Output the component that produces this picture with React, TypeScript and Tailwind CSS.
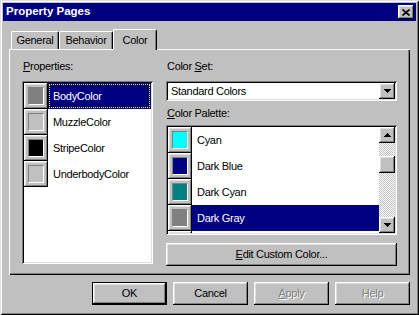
import React from 'react';

const raised =
  'shadow-[inset_-1px_-1px_0_#000,inset_1px_1px_0_#fff,inset_-2px_-2px_0_#808080,inset_2px_2px_0_#dfdfdf]';
const sunken =
  'shadow-[inset_1px_1px_0_#808080,inset_-1px_-1px_0_#fff,inset_2px_2px_0_#000,inset_-2px_-2px_0_#dfdfdf]';

function Swatch({ bg }: { bg: string }) {
  return (
    <div className={`w-[24px] h-[26px] shrink-0 bg-[#c0c0c0] p-[4px] ${raised}`}>
      <div className={`h-full border border-t-[#808080] border-l-[#808080] border-b-white border-r-white ${bg}`} />
    </div>
  );
}

function Row({ bg, label, selected, focus }: { bg: string; label: string; selected?: boolean; focus?: boolean }) {
  return (
    <div className="flex h-[26px] shrink-0">
      <Swatch bg={bg} />
      {selected ? (
        <div className="flex-1 bg-[#000080] p-[1px] text-white">
          <div className={`h-full flex items-center pl-[3px] border border-dotted ${focus ? 'border-[#ffff00]' : 'border-transparent'}`}>
            {label}
          </div>
        </div>
      ) : (
        <div className="flex-1 flex items-center pl-[5px]">{label}</div>
      )}
    </div>
  );
}

function Arrow({ up }: { up?: boolean }) {
  return (
    <svg width="7" height="4" viewBox="0 0 7 4" shapeRendering="crispEdges">
      <polygon points={up ? '3.5,0 7,4 0,4' : '0,0 7,0 3.5,4'} fill="#000" />
    </svg>
  );
}

function Tab({ label, w, selected }: { label: string; w: string; selected?: boolean }) {
  if (selected) {
    return (
      <div className={`${w} h-[21px] -mb-px relative z-10 bg-[#c0c0c0] border-l border-t border-white rounded-tl-[2px] rounded-tr-[2px] shadow-[inset_-1px_0_0_#808080] border-r border-r-black flex justify-center pt-[2px]`}>
        {label}
      </div>
    );
  }
  return (
    <div className={`${w} h-[18px] bg-[#c0c0c0] border-l border-t border-white rounded-tl-[2px] rounded-tr-[2px] shadow-[inset_-1px_0_0_#808080] border-r border-r-black flex items-center justify-center`}>
      {label}
    </div>
  );
}

function Button({ children, primary, disabled }: { children: React.ReactNode; primary?: boolean; disabled?: boolean }) {
  const text = disabled ? 'text-[#808080] [text-shadow:1px_1px_0_#fff]' : '';
  if (primary) {
    return (
      <div className="w-[75px] h-[23px] border border-black">
        <div className={`h-full flex items-center justify-center ${raised} ${text}`}>{children}</div>
      </div>
    );
  }
  return <div className={`w-[75px] h-[23px] flex items-center justify-center ${raised} ${text}`}>{children}</div>;
}

export default function App() {
  return (
    <div className="w-[419px] h-[315px] bg-[#c0c0c0] p-[3px] font-['Liberation_Sans',Arial,sans-serif] text-[11px] tracking-[-0.3px] text-black shadow-[inset_1px_1px_0_#dfdfdf,inset_-1px_-1px_0_#000,inset_2px_2px_0_#fff,inset_-2px_-2px_0_#808080]">
      {/* Title bar */}
      <div className="h-[18px] bg-[#000080] flex items-center justify-between pl-[3px] pr-[2px]">
        <span className="text-white font-bold text-[11.5px] tracking-normal">Property Pages</span>
        <div className={`w-[16px] h-[14px] bg-[#c0c0c0] flex items-center justify-center ${raised}`}>
          <svg width="8" height="7" viewBox="0 0 8 7">
            <path d="M0.5 0.5L7.5 6.5M7.5 0.5L0.5 6.5" stroke="#000" strokeWidth="1.6" />
          </svg>
        </div>
      </div>

      {/* Tabs */}
      <div className="mt-[8px] ml-[6px] pl-[2px] h-[20px] flex items-end">
        <Tab label="General" w="w-[48px]" />
        <Tab label="Behavior" w="w-[54px]" />
        <Tab label="Color" w="w-[44px]" selected />
      </div>

      {/* Page */}
      <div className="ml-[6px] w-[401px] h-[226px] flex gap-[13px] pt-[11px] pl-[13px] pr-[13px] shadow-[inset_1px_1px_0_#fff,inset_-1px_-1px_0_#000,inset_-2px_-2px_0_#808080]">
        <div className="w-[131px] flex flex-col">
          <div className="h-[13px] leading-[13px] pl-[1px] mb-[8px]">
            <span className="underline">P</span>roperties:
          </div>
          <div className={`h-[183px] bg-white p-[2px] flex flex-col ${sunken}`}>
            <Row bg="bg-[#808080]" label="BodyColor" selected focus />
            <Row bg="bg-[#c0c0c0]" label="MuzzleColor" />
            <Row bg="bg-black" label="StripeColor" />
            <Row bg="bg-[#c0c0c0]" label="UnderbodyColor" />
          </div>
        </div>

        <div className="w-[231px] flex flex-col">
          <div className="h-[13px] leading-[13px] pl-[1px] mb-[8px]">
            Color <span className="underline">S</span>et:
          </div>
          <div className={`h-[20px] bg-white p-[2px] flex ${sunken}`}>
            <div className="flex-1 flex items-center pl-[3px]">Standard Colors</div>
            <div className={`w-[16px] h-full bg-[#c0c0c0] flex items-center justify-center ${raised}`}>
              <Arrow />
            </div>
          </div>
          <div className="h-[13px] leading-[13px] pl-[1px] mt-[6px] mb-[5px]">
            <span className="underline">C</span>olor Palette:
          </div>
          <div className={`h-[110px] bg-white p-[2px] flex ${sunken}`}>
            <div className="flex-1 flex flex-col overflow-hidden">
              <Row bg="bg-[#00ffff]" label="Cyan" />
              <Row bg="bg-[#000080]" label="Dark Blue" />
              <Row bg="bg-[#008080]" label="Dark Cyan" />
              <Row bg="bg-[#808080]" label="Dark Gray" selected />
              <Row bg="bg-[#008000]" label="" />
            </div>
            <div className="w-[16px] flex flex-col bg-[image:repeating-conic-gradient(#fff_0_25%,#c0c0c0_0_50%)] bg-size-[2px_2px] bg-[length:2px_2px]">
              <div className={`h-[16px] shrink-0 bg-[#c0c0c0] flex items-center justify-center ${raised}`}>
                <Arrow up />
              </div>
              <div className="flex-1 flex flex-col pt-[13px]">
                <div className={`h-[17px] bg-[#c0c0c0] ${raised}`} />
              </div>
              <div className={`h-[16px] shrink-0 bg-[#c0c0c0] flex items-center justify-center ${raised}`}>
                <Arrow />
              </div>
            </div>
          </div>
          <div className={`mt-[8px] h-[23px] flex items-center justify-center ${raised}`}>
            <span>
              <span className="underline">E</span>dit Custom Color...
            </span>
          </div>
        </div>
      </div>

      {/* Buttons */}
      <div className="ml-[6px] w-[401px] mt-[7px] flex justify-end gap-[6px]">
        <Button primary>OK</Button>
        <Button>Cancel</Button>
        <Button disabled>
          <span className="underline">A</span>pply
        </Button>
        <Button disabled>Help</Button>
      </div>
    </div>
  );
}
